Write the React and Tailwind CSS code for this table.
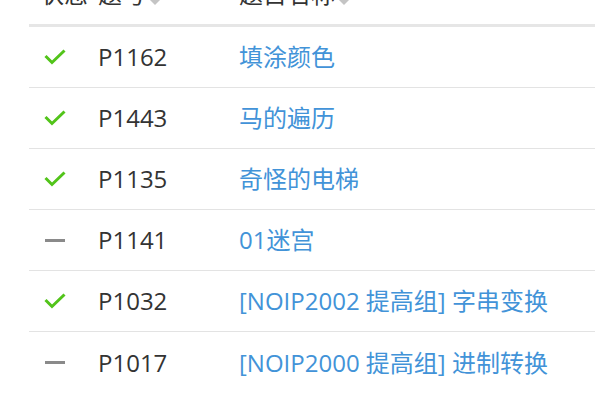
import React from "react";

const rows = [
  { ok: true, id: "P1162", title: "填涂颜色" },
  { ok: true, id: "P1443", title: "马的遍历" },
  { ok: true, id: "P1135", title: "奇怪的电梯" },
  { ok: false, id: "P1141", title: "01迷宫" },
  { ok: true, id: "P1032", title: "[NOIP2002 提高组] 字串变换" },
  { ok: false, id: "P1017", title: "[NOIP2000 提高组] 进制转换" },
];

const font = { fontFamily: '"Open Sans", "Noto Sans CJK SC", sans-serif' };

function Check() {
  return (
    <svg width="22" height="16" viewBox="0 0 22 16" className="block">
      <path d="M1.5 7 L8 13.5 L20.5 1.5" fill="none" stroke="#52c41a" strokeWidth="3" strokeLinecap="butt" strokeLinejoin="miter" />
    </svg>
  );
}

function Dash() {
  return <div className="w-[20px] h-[3px] bg-[#8a8a8a] ml-[1px]" />;
}

function Sort() {
  return (
    <svg width="12" height="14" viewBox="0 0 12 14" className="block ml-[3px] mb-[1px]">
      <path d="M0 6 L6 0 L12 6 Z" fill="#c4c4c4" />
      <path d="M0 8 L12 8 L6 14 Z" fill="#c4c4c4" />
    </svg>
  );
}

export default function App() {
  return (
    <div className="w-[595px] h-[399px] overflow-hidden bg-white" style={font}>
      <div className="ml-[29px] w-[600px]">
        <div className="flex items-end h-[44px] -mt-[17px] border-b-[3px] border-[#e6e6e6] text-[24px] leading-[24px] text-[#333] pb-[18px]">
          <div className="w-[69px] pl-[11px]">状态</div>
          <div className="w-[141px] flex items-end">题号<Sort /></div>
          <div className="flex items-end">题目名称<Sort /></div>
        </div>
        {rows.map((r, i) => (
          <div
            key={r.id}
            className={
              "flex items-center h-[61px] text-[24px] " +
              (i < rows.length - 1 ? "border-b border-[#e3e3e3]" : "")
            }
          >
            <div className="w-[69px] pl-[15px] flex items-center">{r.ok ? <Check /> : <Dash />}</div>
            <div className="w-[141px] text-[#333]">{r.id}</div>
            <div className="text-[#4293d8] whitespace-nowrap">{r.title}</div>
          </div>
        ))}
      </div>
    </div>
  );
}
